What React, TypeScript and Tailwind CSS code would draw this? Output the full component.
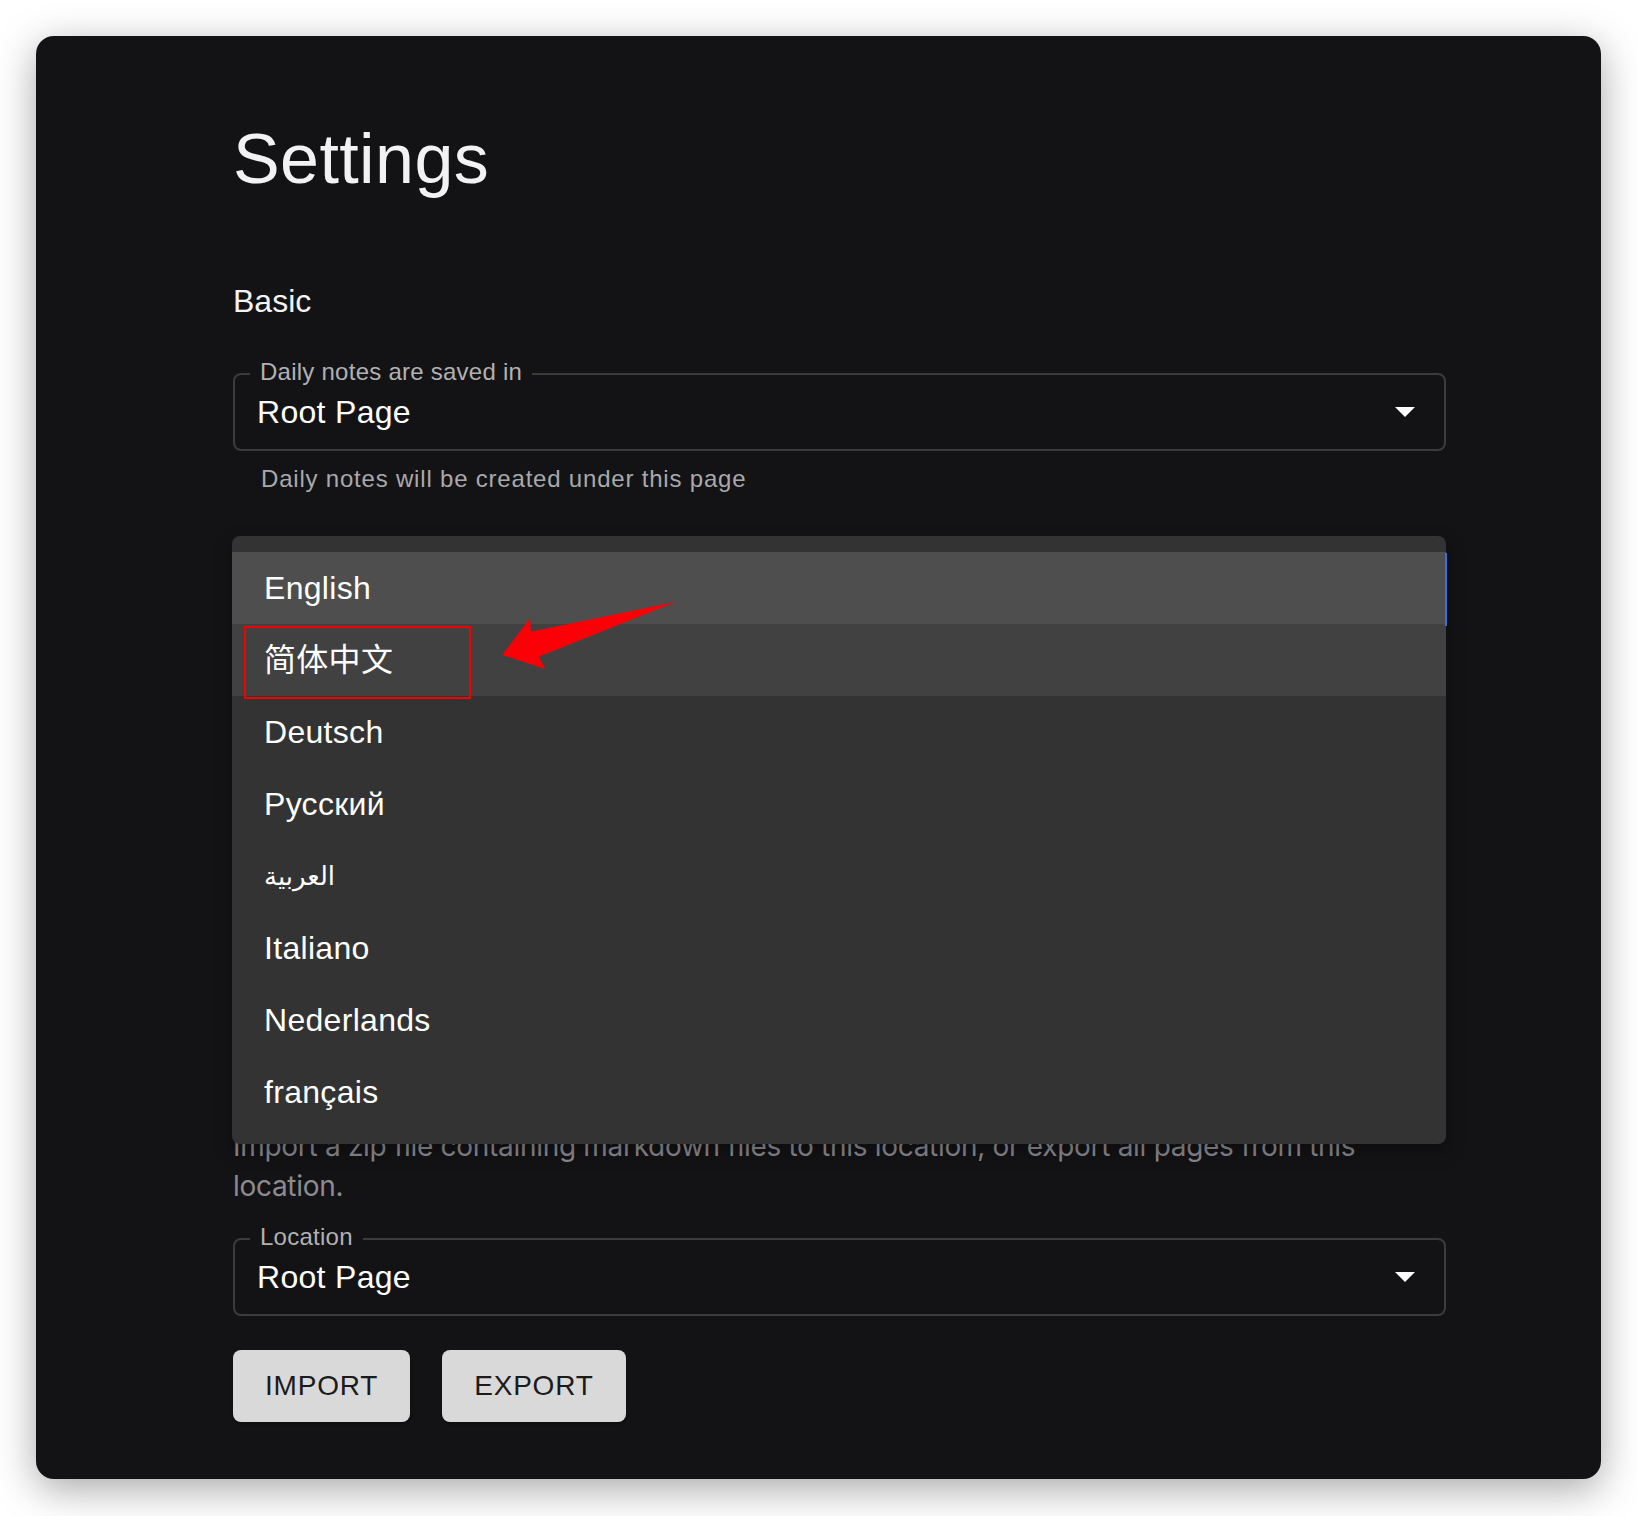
import React from "react";

const languages = ["English", "简体中文", "Deutsch", "Русский", "العربية", "Italiano", "Nederlands", "français"];

const OutlinedSelect = ({ label, value }: { label: string; value: string }) => {
  return (
    <div className="relative flex h-[78px] items-center rounded-[8px] border-2 border-[#3c3c3f] pl-[22px] pr-[29px]">
      <span className="absolute left-[15px] top-[-15px] bg-[#131315] px-[10px] text-[24px] leading-[24px] tracking-[0.25px] text-[#b1b1b3]">
        {label}
      </span>
      <span className="flex-1 text-[32px] leading-[46px] tracking-[0.3px] text-white">{value}</span>
      <svg width="20" height="10" viewBox="0 0 20 10">
        <path d="M0 0 L20 0 L10 10 Z" fill="#ffffff" />
      </svg>
    </div>
  );
};

const App = () => {
  return (
    <div className="min-h-screen bg-white p-[36px]">
      <div className="relative h-[1443px] w-[1565px] rounded-[18px] bg-[#131315] font-['Liberation_Sans',Arial,sans-serif] shadow-[0_10px_40px_rgba(0,0,0,0.35)]">
        <div className="flex w-[1410px] flex-col pl-[197px] pt-[81px]">
          <h1 className="text-[70px] font-normal leading-[84px] tracking-[0.4px] text-[#f2f2f4]">Settings</h1>

          <h2 className="mt-[76px] text-[32px] leading-[48px] text-[#f4f4f5]">Basic</h2>

          <div className="mt-[48px]">
            <OutlinedSelect label="Daily notes are saved in" value="Root Page" />
          </div>
          <p className="mt-[8px] pl-[28px] text-[24px] leading-[40px] tracking-[0.8px] text-[#a9a9ab]">
            Daily notes will be created under this page
          </p>

          {/* language select and section title sit under the open menu */}
          <div className="h-[627px]" />

          <p className="font-['Inter',sans-serif] text-[28px] leading-[40px] tracking-[-0.3px] text-[#8c8b91]">
            Import a zip file containing markdown files to this location, or export all pages from this location.
          </p>

          <div className="mt-[32px]">
            <OutlinedSelect label="Location" value="Root Page" />
          </div>

          <div className="mt-[34px] flex gap-[32px]">
            <button className="h-[72px] rounded-[8px] bg-[#d9d9d9] px-[32px] text-[28px] tracking-[0.8px] text-[#1b1b1b] shadow-[0_2px_3px_rgba(0,0,0,0.3)]">
              IMPORT
            </button>
            <button className="h-[72px] rounded-[8px] bg-[#d9d9d9] px-[32px] text-[28px] tracking-[0.8px] text-[#1b1b1b] shadow-[0_2px_3px_rgba(0,0,0,0.3)]">
              EXPORT
            </button>
          </div>
        </div>

        {/* open language menu */}
        <div className="absolute left-[196px] top-[500px] w-[1214px] rounded-[8px] bg-[#333333] py-[16px] shadow-[0_8px_20px_rgba(0,0,0,0.3)]">
          {languages.map((lang, index) => (
            <div
              key={lang}
              className={
                index === 0
                  ? "flex h-[72px] items-center bg-[#4e4e4e] pl-[32px] text-[32px] text-white"
                  : index === 1
                  ? "flex h-[72px] items-center bg-[#414141] pl-[32px] text-[32px] text-white"
                  : "flex h-[72px] items-center pl-[32px] text-[32px] text-white"
              }
            >
              {index === 4 ? (
                <span className="font-['DejaVu_Sans',sans-serif] text-[26px]">{lang}</span>
              ) : (
                <span className="font-['Liberation_Sans','Noto_Sans_CJK_SC',sans-serif] tracking-[0.3px]">{lang}</span>
              )}
            </div>
          ))}
        </div>
        <div className="absolute left-[1409px] top-[517px] h-[73px] w-[2px] bg-[#3a6fdc]" />

        {/* annotation */}
        <div className="absolute left-[208px] top-[590px] h-[73px] w-[227px] border-2 border-[#f50000]" />
        <svg className="absolute left-[460px] top-[556px]" width="230" height="120" viewBox="496 592 230 120">
          <polygon
            points="676.5,601.7 531,631.7 530,618.3 502.3,655 545.2,669 538.7,656.7"
            fill="#fb0007"
          />
        </svg>
      </div>
    </div>
  );
};

export default App;
